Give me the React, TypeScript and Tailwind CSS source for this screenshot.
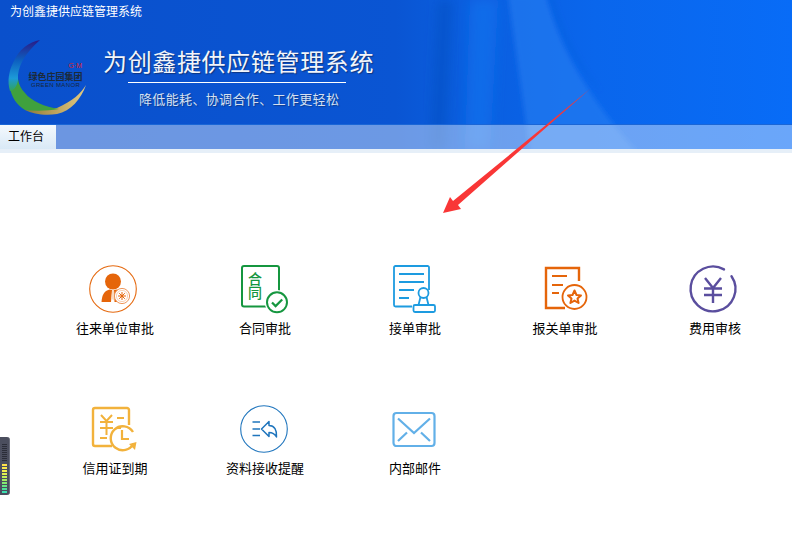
import React from "react";

const cjk = "font-['Liberation_Sans','Noto_Sans_CJK_SC',sans-serif]";

function PartnerIcon() {
  return (
    <svg viewBox="2 0 48 48" className="w-12 h-12 overflow-visible">
      <circle cx="26" cy="24" r="23.3" fill="none" stroke="#e5690f" strokeWidth="1.1" transform="translate(-2 0)" />
      <circle cx="24" cy="16.5" r="8" fill="#e5650a" />
      <path d="M12.5 37 C13 30 15 26 20.5 24.5 L23 25 L22 37 Z" fill="#e5650a" />
      <path d="M25 25 L28 24.5 C29.5 25 30.5 25.5 31.5 26.5 C28.5 28.5 27.5 32 28 37 L25.5 37 Z" fill="#e5650a" />
      <path d="M23.2 25 L25 25 L25.6 33 L24.2 35.5 L22.6 33 Z" fill="#f9d9bf" />
      <circle cx="33" cy="31" r="7.6" fill="#fff" stroke="#eb8a48" strokeWidth="0.9" />
      <circle cx="33" cy="31" r="5.6" fill="none" stroke="#f2b184" strokeWidth="0.6" />
      <path d="M33 27v8M29 31h8M30.2 28.2l5.6 5.6M35.8 28.2l-5.6 5.6" stroke="#e5650a" strokeWidth="1" />
    </svg>
  );
}

function ContractIcon() {
  return (
    <svg viewBox="0 0 48 48" className="w-12 h-12 overflow-visible">
      <rect x="1" y="1" width="37" height="40.5" rx="2" fill="none" stroke="#15963f" strokeWidth="2" />
      <text textAnchor="middle" fontSize="14" fill="#15963f" fontFamily="'Noto Sans CJK SC', sans-serif" fontWeight="500">
        <tspan x="14" y="19">合</tspan>
        <tspan x="14" y="33">同</tspan>
      </text>
      <circle cx="36" cy="37.3" r="12.2" fill="#fff" />
      <circle cx="36" cy="37.3" r="10" fill="#fff" stroke="#15963f" strokeWidth="2" />
      <path d="M31 37.5 l3.6 3.6 l6.6 -6.6" fill="none" stroke="#15963f" strokeWidth="2.2" />
    </svg>
  );
}

function OrderIcon() {
  return (
    <svg viewBox="-2 0 48 48" className="w-12 h-12 overflow-visible">
      <path d="M36 25 V2.5 A1.5 1.5 0 0 0 34.5 1 H2.5 A1.5 1.5 0 0 0 1 2.5 V40 A1.5 1.5 0 0 0 2.5 41.5 H19" fill="none" stroke="#1d9be0" strokeWidth="1.8" />
      <path d="M6 9 H31 M6 17 H31 M6 25 H21 M6 33 H16" stroke="#1d9be0" strokeWidth="1.8" />
      <circle cx="30.5" cy="28" r="5" fill="#fff" stroke="#1d9be0" strokeWidth="1.8" />
      <path d="M27.5 32 L25.5 40 M33.5 32 L35.5 40" stroke="#1d9be0" strokeWidth="1.8" />
      <rect x="20.5" y="40" width="21.5" height="7" rx="1.5" fill="#fff" stroke="#1d9be0" strokeWidth="1.8" />
    </svg>
  );
}

function CustomsIcon() {
  return (
    <svg viewBox="-3 0 48 48" className="w-12 h-12 overflow-visible">
      <path d="M35 16 V3 H2 V43 H21" fill="none" stroke="#e5650a" strokeWidth="2.4" />
      <path d="M8 11 H23 M8 20 H19 M8 28 H15" stroke="#e5650a" strokeWidth="2.2" />
      <circle cx="30.5" cy="32" r="12" fill="#fff" stroke="#e5650a" strokeWidth="1.8" />
      <path d="M30.5 25.5 L32.5 30 L37 30.4 L33.5 33.4 L34.6 38 L30.5 35.6 L26.4 38 L27.5 33.4 L24 30.4 L28.5 30 Z" fill="none" stroke="#e5650a" strokeWidth="2" strokeLinejoin="round" />
    </svg>
  );
}

function FeeIcon() {
  return (
    <svg viewBox="2 0 48 48" className="w-12 h-12 overflow-visible">
      <path d="M35 4.4 A22.4 22.4 0 1 0 42.5 11.3" fill="none" stroke="#5a4e9e" strokeWidth="2.4" strokeLinecap="round" />
      <path d="M16 13 L24 23 L32 13 M15 23.5 H33 M15 30 H33 M24 23 V38" fill="none" stroke="#5a4e9e" strokeWidth="2.4" />
    </svg>
  );
}

function CreditIcon() {
  return (
    <svg viewBox="-1 -1 48 48" className="w-12 h-12 overflow-visible">
      <path d="M37 19 V4 A2 2 0 0 0 35 2 H3 A2 2 0 0 0 1 4 V38 A2 2 0 0 0 3 40 H20" fill="none" stroke="#f2b23c" strokeWidth="2.4" />
      <path d="M9 9 L14.5 15 L20 9 M8 16 H21 M8 22 H21 M14.5 15 V29 M25 12 H32 M8 32 H15 M25 22 H29" fill="none" stroke="#f2b23c" strokeWidth="2" />
      <path d="M41.5 37.5 A12 12 0 1 1 41 26" fill="none" stroke="#f2b23c" strokeWidth="2.4" />
      <path d="M30 24 V33 H37" fill="none" stroke="#f2b23c" strokeWidth="2.2" />
      <path d="M37 38 L44.5 36 L43 44 Z" fill="#f2b23c" />
    </svg>
  );
}

function ReceiveIcon() {
  return (
    <svg viewBox="1 0 48 48" className="w-12 h-12 overflow-visible">
      <circle cx="24" cy="24" r="23.3" fill="none" stroke="#1f75bd" strokeWidth="1.1" />
      <path d="M12.5 17 H20 M12.5 24 H20 M12.5 30.5 H20" stroke="#1f75bd" strokeWidth="1.6" />
      <path d="M21.5 24 L29 16.5 V20.5 C34.5 20.5 37 25 36.5 32 C34.5 28.5 32.5 27.5 29 27.5 V31.5 Z" fill="none" stroke="#1f75bd" strokeWidth="1.5" strokeLinejoin="round" />
    </svg>
  );
}

function MailIcon() {
  return (
    <svg viewBox="1 0 48 48" className="w-12 h-12 overflow-visible">
      <rect x="3.5" y="8" width="41" height="33" rx="3" fill="none" stroke="#62b0e8" strokeWidth="2.2" />
      <path d="M8 13.5 L24 28 L40 13.5 M8 36 L17 27.5 M40 36 L31 27.5" fill="none" stroke="#62b0e8" strokeWidth="2.2" />
    </svg>
  );
}

function Logo() {
  return (
    <svg viewBox="0 0 80 80" className="absolute left-[7px] top-[39px] w-[80px] h-[80px]">
      <defs>
        <linearGradient id="logoTop" x1="0" y1="0" x2="0" y2="1">
          <stop offset="0" stopColor="#2a1a86" />
          <stop offset="0.4" stopColor="#0d5fc0" />
          <stop offset="0.75" stopColor="#1c9ad8" />
          <stop offset="1" stopColor="#2fa35a" />
        </linearGradient>
        <linearGradient id="logoGold" x1="0" y1="0" x2="1" y2="0">
          <stop offset="0" stopColor="#8a7a3a" />
          <stop offset="0.45" stopColor="#b99f5a" />
          <stop offset="1" stopColor="#e3cb82" />
        </linearGradient>
      </defs>
      <path d="M18 71 C26 75 38 77 50 75 C64 72 74 60 79 46 C74 54 66 62 50 69 C40 70 28 70 18 71 Z" fill="url(#logoGold)" />
      <path d="M3 48 C4 58 10 66 18 71 C28 72 40 72 52 70 C38 68 24 62 18 54 C14 50 12 46 11 40 Z" fill="#3fa13e" />
      <path d="M33 1 C22 3 12 10 6 24 C2 32 0 42 3 52 C6 52 10 48 11 41 C10 28 18 14 33 1 Z" fill="url(#logoTop)" />
      <text x="75" y="29" textAnchor="end" fontSize="7" fill="#d8232a" fontFamily="'Liberation Sans', sans-serif">G·M</text>
      <text x="48.5" y="41" textAnchor="middle" fontSize="9" fill="#1c2a3a" fontFamily="'Noto Sans CJK SC', serif" fontWeight="700">绿色庄园集团</text>
      <text x="48.5" y="48" textAnchor="middle" fontSize="6" letterSpacing="0.35" fill="#16263a" fontFamily="'Liberation Sans', sans-serif">GREEN MANOR</text>
    </svg>
  );
}

function HeaderBackdrop() {
  return (
    <svg viewBox="0 0 792 149" preserveAspectRatio="none" className="absolute inset-0 w-full h-full">
      <defs>
        <filter id="soft" x="-30%" y="-20%" width="160%" height="140%">
          <feGaussianBlur stdDeviation="6" />
        </filter>
        <filter id="softer" x="-20%" y="-20%" width="140%" height="140%">
          <feGaussianBlur stdDeviation="2.5" />
        </filter>
      </defs>
      <path d="M508 -5 H546 C560 50 590 100 640 155 H530 C522 90 514 40 508 -5 Z" fill="#2a7ef2" fillOpacity="0.6" filter="url(#softer)" />
      <path d="M438 0 H452 L445 149 H430 Z" fill="#0b4cb8" fillOpacity="0.45" filter="url(#soft)" />
      <path d="M470 0 H498 L490 149 H465 Z" fill="#1272ee" fillOpacity="0.65" filter="url(#soft)" />
      <path d="M548 -5 H553 C565 40 585 70 602 92 C578 70 560 35 548 -5 Z" fill="#0a5fdc" fillOpacity="0.4" filter="url(#softer)" />
    </svg>
  );
}

const apps = [
  { label: "往来单位审批", icon: PartnerIcon },
  { label: "合同审批", icon: ContractIcon },
  { label: "接单审批", icon: OrderIcon },
  { label: "报关单审批", icon: CustomsIcon },
  { label: "费用审核", icon: FeeIcon },
  { label: "信用证到期", icon: CreditIcon },
  { label: "资料接收提醒", icon: ReceiveIcon },
  { label: "内部邮件", icon: MailIcon },
];

const meterColors = ["#ffe14a", "#fbe84a", "#f2ee4c", "#dff050", "#c4f058", "#a4ee62", "#84ea72", "#66e684", "#4ee29a", "#3adfb0"];

export default function App() {
  return (
    <div className={`h-screen overflow-hidden relative bg-white flex flex-col ${cjk}`}>
      <header className="relative h-[149px] shrink-0 overflow-hidden flex flex-col bg-[linear-gradient(90deg,#0a50cc_0%,#0a55d3_50%,#0a5cdc_56%,#0a66ec_75%,#086cf7_100%)]">
        <HeaderBackdrop />
        <Logo />
        <div className="relative h-[25px] pl-[10px] leading-[25px] text-[12px] text-white">为创鑫捷供应链管理系统</div>
        <div className="relative flex-1 flex flex-col items-start pl-[103px]">
          <h1 className="mt-[20px] h-[36px] leading-[36px] text-[24px] tracking-[0.65px] font-normal text-[#f2f5fa] [text-shadow:1px_1px_1px_rgba(20,30,60,0.55)]">
            为创鑫捷供应链管理系统
          </h1>
          <div className="ml-[25px] mt-px w-[218px] h-px bg-white" />
          <p className="ml-[36px] mt-[6px] leading-[22px] text-[13px] tracking-[0.35px] text-[#d5e0f2] [text-shadow:1px_1px_1px_rgba(20,30,60,0.45)]">
            降低能耗、协调合作、工作更轻松
          </p>
        </div>
        <nav className="relative h-[25px] shrink-0 flex bg-white/40 border-t border-[#1a66d6]">
          <div className="w-[56px] pl-[8px] leading-[24px] text-[12px] text-black bg-[linear-gradient(180deg,#f4f9fd,#d9e9f6)]">工作台</div>
        </nav>
      </header>
      <div className="h-[4px] shrink-0 bg-[#e6eff8]" />

      <main className="grid grid-cols-[repeat(5,150px)] auto-rows-[140px] pl-[40px] pt-[112px]">
        {apps.map((app) => (
          <div key={app.label} className="flex flex-col items-center">
            <app.icon />
            <span className="mt-[6px] leading-[20px] text-[13px] text-black">{app.label}</span>
          </div>
        ))}
      </main>

      {/* red annotation arrow pasted over the screenshot */}
      <svg viewBox="0 0 792 545" className="absolute inset-0 w-full h-full pointer-events-none">
        <polygon points="590,89 458,205 461,209 443,213 450,197 453,201" fill="#f93636" />
      </svg>

      {/* floating meter widget on the left edge */}
      <div className="absolute left-0 top-[437px] w-[10px] h-[58px] rounded-r-[3px] bg-[#4b4e5e] border-r border-[#6b6e7c] flex flex-col gap-px pt-[7px] pl-[2px]">
        {Array.from({ length: 9 }).map((_, i) => (
          <div key={i} className="w-[5px] h-px bg-[#2b2d38]" />
        ))}
        <div className="h-px" />
        {meterColors.map((color) => (
          <div key={color} className="w-[5px] h-[2px]" style={{ backgroundColor: color }} />
        ))}
      </div>
    </div>
  );
}
